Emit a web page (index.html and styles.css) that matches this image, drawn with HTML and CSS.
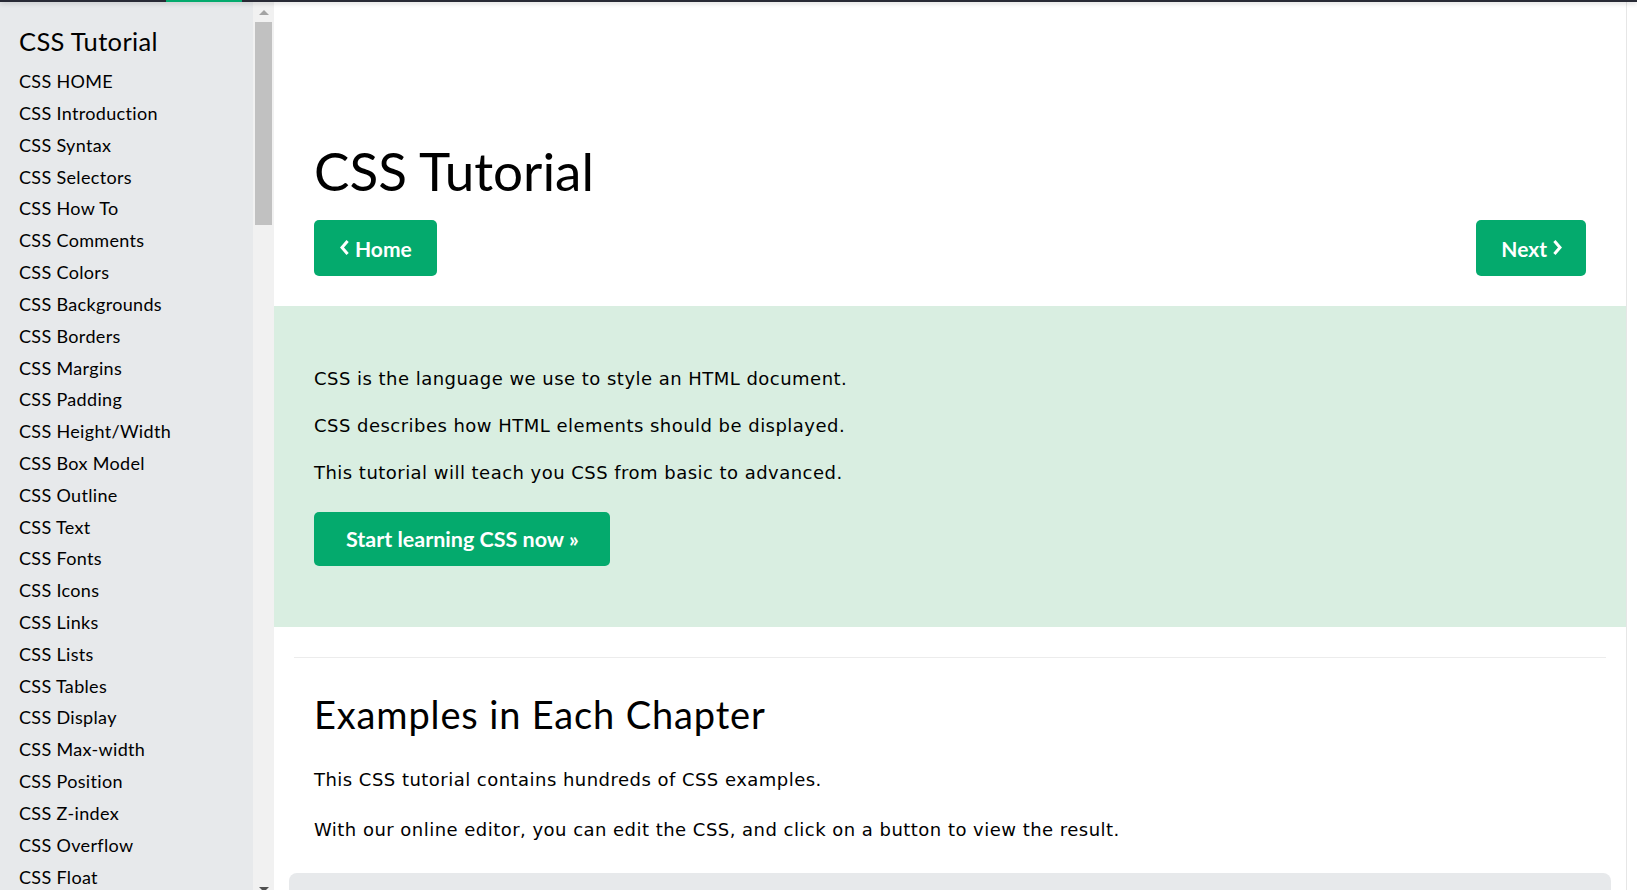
FILE: index.html
```html
<!DOCTYPE html>
<html lang="en">
<head>
<meta charset="utf-8">
<title>CSS Tutorial</title>
<link rel="stylesheet" href="styles.css">
</head>
<body>
<div class="topbar"><span class="topbar-active"></span></div>
<div class="page">
  <aside class="sidebar">
    <nav class="menu">
      <h2 class="menu-title">CSS Tutorial</h2>
      <a class="menu-link">CSS HOME</a>
      <a class="menu-link">CSS Introduction</a>
      <a class="menu-link">CSS Syntax</a>
      <a class="menu-link">CSS Selectors</a>
      <a class="menu-link">CSS How To</a>
      <a class="menu-link">CSS Comments</a>
      <a class="menu-link">CSS Colors</a>
      <a class="menu-link">CSS Backgrounds</a>
      <a class="menu-link">CSS Borders</a>
      <a class="menu-link">CSS Margins</a>
      <a class="menu-link">CSS Padding</a>
      <a class="menu-link">CSS Height/Width</a>
      <a class="menu-link">CSS Box Model</a>
      <a class="menu-link">CSS Outline</a>
      <a class="menu-link">CSS Text</a>
      <a class="menu-link">CSS Fonts</a>
      <a class="menu-link">CSS Icons</a>
      <a class="menu-link">CSS Links</a>
      <a class="menu-link">CSS Lists</a>
      <a class="menu-link">CSS Tables</a>
      <a class="menu-link">CSS Display</a>
      <a class="menu-link">CSS Max-width</a>
      <a class="menu-link">CSS Position</a>
      <a class="menu-link">CSS Z-index</a>
      <a class="menu-link">CSS Overflow</a>
      <a class="menu-link">CSS Float</a>
    </nav>
    <div class="scrollbar">
      <span class="sb-arrow sb-up"></span>
      <span class="sb-thumb"></span>
      <span class="sb-arrow sb-down"></span>
    </div>
  </aside>

  <main class="main">
    <h1 class="title">CSS Tutorial</h1>
    <div class="nav-btns">
      <a class="btn btn-nav">
        <svg class="chev" viewBox="0 0 9 15" width="9" height="15"><polyline points="7.6,1 2,7.5 7.6,14" /></svg>
        <span>Home</span>
      </a>
      <a class="btn btn-nav btn-next">
        <span>Next</span>
        <svg class="chev" viewBox="0 0 9 15" width="9" height="15"><polyline points="1.4,1 7,7.5 1.4,14" /></svg>
      </a>
    </div>

    <section class="panel">
      <p class="text">CSS is the language we use to style an HTML document.</p>
      <p class="text">CSS describes how HTML elements should be displayed.</p>
      <p class="text">This tutorial will teach you CSS from basic to advanced.</p>
      <a class="btn btn-big">Start learning CSS now &raquo;</a>
    </section>

    <hr class="divider">

    <h2 class="subtitle">Examples in Each Chapter</h2>
    <p class="text text-a">This CSS tutorial contains hundreds of CSS examples.</p>
    <p class="text text-b">With our online editor, you can edit the CSS, and click on a button to view the result.</p>
    <div class="example-box"></div>
  </main>

  <div class="right-strip"></div>
</div>
</body>
</html>
```

FILE: styles.css
```css
html, body {
  margin: 0;
  padding: 0;
  height: 100%;
  overflow: hidden;
  background: #ffffff;
  color: #000000;
}

.topbar {
  position: fixed;
  top: 0;
  left: 0;
  right: 0;
  height: 2px;
  background: #282a35;
  box-shadow: 0 1px 5px rgba(0, 0, 0, 0.25);
  display: flex;
  z-index: 5;
}

.topbar-active {
  margin-left: 166px;
  width: 76px;
  background: #04aa6d;
}

.page {
  display: flex;
  height: 890px;
}

/* ---------- sidebar ---------- */
.sidebar {
  flex: none;
  width: 274px;
  display: flex;
  background: #e7e9eb;
}

.menu {
  width: 253px;
  box-sizing: border-box;
  padding: 22.8px 0 0 19px;
  overflow: hidden;
  font-family: "Lato", "Liberation Sans", sans-serif;
}

.menu-title {
  margin: 0 0 7px;
  font-size: 25.5px;
  line-height: 36px;
  font-weight: 400;
  letter-spacing: 0.35px;
}

.menu-link {
  display: block;
  font-size: 18px;
  line-height: 27px;
  padding: 2.42px 0;
  color: #000;
  white-space: nowrap;
  letter-spacing: 0.33px;
}

.scrollbar {
  width: 21px;
  background: #f1f1f1;
  display: flex;
  flex-direction: column;
  align-items: center;
  padding-top: 10px;
  box-sizing: border-box;
}

.sb-arrow {
  width: 0;
  height: 0;
  border-left: 5px solid transparent;
  border-right: 5px solid transparent;
}

.sb-up {
  border-bottom: 5px solid #a3a3a3;
}

.sb-down {
  margin-top: auto;
  margin-bottom: -2px;
  border-top: 5px solid #505050;
}

.sb-thumb {
  width: 17px;
  height: 203px;
  margin-top: 7px;
  background: #c1c1c1;
}

/* ---------- main ---------- */
.main {
  flex: none;
  width: 1352px;
  box-sizing: border-box;
  padding: 138.5px 40px 0;
  overflow: hidden;
}

.title {
  margin: 0;
  font-family: "Lato", "Liberation Sans", sans-serif;
  font-weight: 400;
  font-size: 53px;
  line-height: 64px;
}

.nav-btns {
  display: flex;
  justify-content: space-between;
  margin-top: 17.5px;
}

.btn {
  display: inline-flex;
  align-items: center;
  box-sizing: border-box;
  background: #04aa6d;
  color: #ffffff;
  border-radius: 5px;
  font-family: "Lato", "Liberation Sans", sans-serif;
  font-weight: 700;
  text-decoration: none;
}

.btn-nav {
  height: 56px;
  padding: 0 25px 0 26px;
  gap: 6px;
  font-size: 21px;
}

.btn-next {
  padding: 0 24px 0 25px;
}

.chev {
  fill: none;
  stroke: #ffffff;
  stroke-width: 3;
  stroke-linecap: butt;
  stroke-linejoin: miter;
  margin-top: -2px;
}

.panel {
  margin: 30px -40px 0;
  padding: 59px 40px 61.3px;
  background: #d9eee1;
}

.text {
  margin: 0 0 19.8px;
  font-family: "DejaVu Sans", Verdana, sans-serif;
  font-size: 18px;
  line-height: 27px;
  letter-spacing: 0.47px;
}

.btn-big {
  margin-top: 6.9px;
  height: 53.4px;
  padding: 0 31px 0 32px;
  font-size: 21.5px;
  font-weight: 700;
}

.divider {
  margin: 30px -20px 0;
  border: 0;
  border-top: 1px solid #ececec;
  height: 0;
}

.subtitle {
  margin: 33.3px 0 0;
  font-family: "Lato", "Liberation Sans", sans-serif;
  font-weight: 400;
  font-size: 38px;
  line-height: 46px;
  letter-spacing: 0.85px;
}

.text-a {
  margin: 29px 0 0;
}

.text-b {
  margin: 22.3px 0 0;
}

.example-box {
  margin: 30.7px -25px 0;
  height: 40px;
  background: #e7e9eb;
  border-radius: 8px 8px 0 0;
}

.right-strip {
  flex: none;
  width: 10px;
  border-left: 1px solid #e6e6e6;
  background: #ffffff;
}
```
